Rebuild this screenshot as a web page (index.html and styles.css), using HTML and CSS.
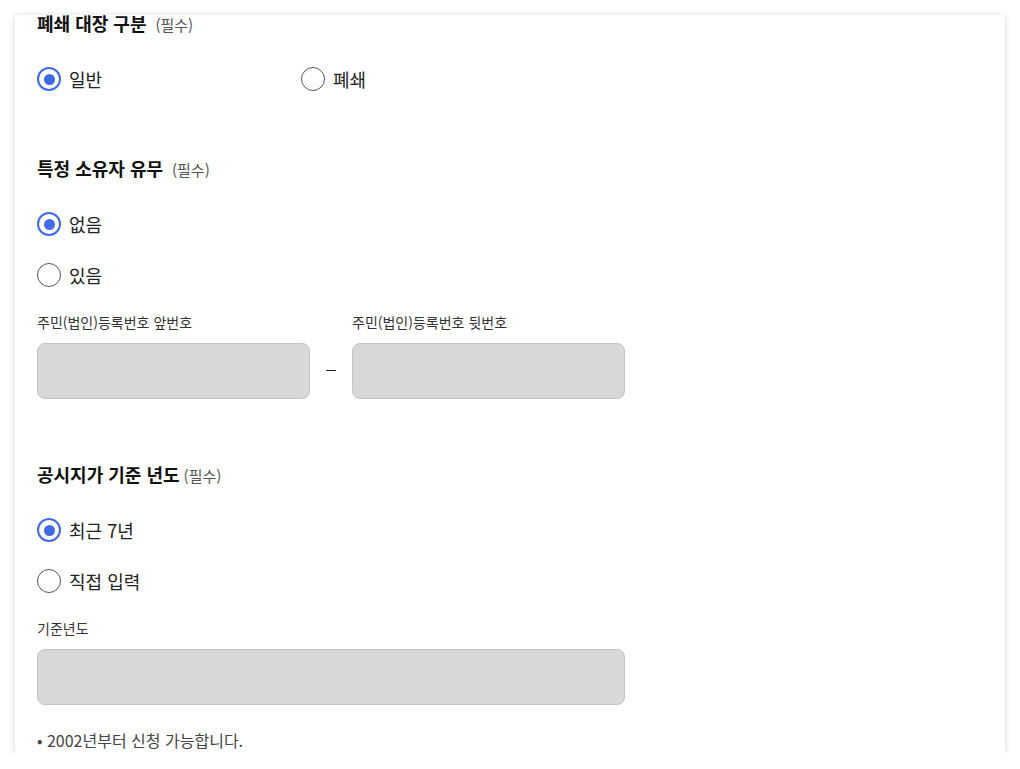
FILE: index.html
```html
<!DOCTYPE html>
<html lang="ko">
<head>
    <meta charset="UTF-8">
    <meta name="viewport" content="width=device-width, initial-scale=1.0">
    <title>토지대장 신청</title>
    <link rel="stylesheet" href="styles.css">
</head>
<body>
    <div class="page">
        <div class="card">
            <div class="section">
                <h3 class="field-title">폐쇄 대장 구분 <span class="required">(필수)</span></h3>
                <div class="radio-group inline">
                    <label class="radio checked"><span class="circle"></span>일반</label>
                    <label class="radio"><span class="circle"></span>폐쇄</label>
                </div>
            </div>

            <div class="section">
                <h3 class="field-title">특정 소유자 유무 <span class="required">(필수)</span></h3>
                <div class="radio-group">
                    <label class="radio checked"><span class="circle"></span>없음</label>
                    <label class="radio"><span class="circle"></span>있음</label>
                </div>
                <div class="input-row">
                    <div class="input-field">
                        <label class="input-label">주민(법인)등록번호 앞번호</label>
                        <div class="input-box"></div>
                    </div>
                    <span class="dash"></span>
                    <div class="input-field">
                        <label class="input-label">주민(법인)등록번호 뒷번호</label>
                        <div class="input-box"></div>
                    </div>
                </div>
            </div>

            <div class="section">
                <h3 class="field-title">공시지가 기준 년도<span class="required tight">(필수)</span></h3>
                <div class="radio-group">
                    <label class="radio checked"><span class="circle"></span>최근 7년</label>
                    <label class="radio"><span class="circle"></span>직접 입력</label>
                </div>
                <div class="input-field wide">
                    <label class="input-label">기준년도</label>
                    <div class="input-box"></div>
                </div>
                <p class="note">• 2002년부터 신청 가능합니다.</p>
            </div>
        </div>
    </div>
</body>
</html>
```

FILE: styles.css
```css
body {
    margin: 0;
    background: #fff;
    font-family: "Noto Sans CJK KR", "Noto Sans", sans-serif;
    color: #222;
}

.page {
    padding: 15px 15px 0;
}

.card {
    background: #fff;
    padding: 0 22px;
    height: 738px;
    box-shadow: 0 1px 6px rgba(0, 0, 0, 0.18);
}

.section:first-child {
    padding-bottom: 2px;
}

.section + .section {
    margin-top: 67px;
}

.field-title {
    display: flex;
    align-items: baseline;
    height: 16px;
    margin: 0;
    font-size: 18px;
    line-height: 16px;
    font-weight: bold;
    color: #111;
}

.required {
    font-size: 15px;
    font-weight: normal;
    color: #555;
    margin-left: 9px;
}

.required.tight {
    margin-left: 4px;
}

.radio-group {
    display: flex;
    flex-direction: column;
    gap: 27px;
    margin-top: 36px;
}

.radio-group.inline {
    flex-direction: row;
    gap: 0;
}

.radio-group.inline .radio {
    width: 264px;
}

.radio {
    display: flex;
    align-items: center;
    gap: 8px;
    height: 24px;
    font-size: 18px;
    line-height: 24px;
    color: #222;
}

.circle {
    width: 24px;
    height: 24px;
    box-sizing: border-box;
    border: 1px solid #555;
    border-radius: 50%;
    display: flex;
    align-items: center;
    justify-content: center;
}

.radio.checked .circle {
    border: 2px solid #3f6ae6;
}

.radio.checked .circle::after {
    content: "";
    width: 11px;
    height: 11px;
    border-radius: 50%;
    background: #3f6ae6;
}

.input-row {
    display: flex;
    align-items: flex-end;
    margin-top: 26px;
}

.input-field {
    width: 273px;
}

.input-field.wide {
    width: 588px;
    margin-top: 26px;
}

.input-label {
    display: block;
    font-size: 14px;
    line-height: 18px;
    color: #333;
    margin-bottom: 12px;
}

.input-box {
    height: 56px;
    box-sizing: border-box;
    background: #d8d8d8;
    border: 1px solid #c4c4c4;
    border-radius: 8px;
}

.dash {
    width: 10px;
    height: 1px;
    background: #222;
    margin: 0 16px 28px;
}

.note {
    margin: 23px 0 0;
    font-size: 16px;
    line-height: 24px;
    color: #444;
}
```
